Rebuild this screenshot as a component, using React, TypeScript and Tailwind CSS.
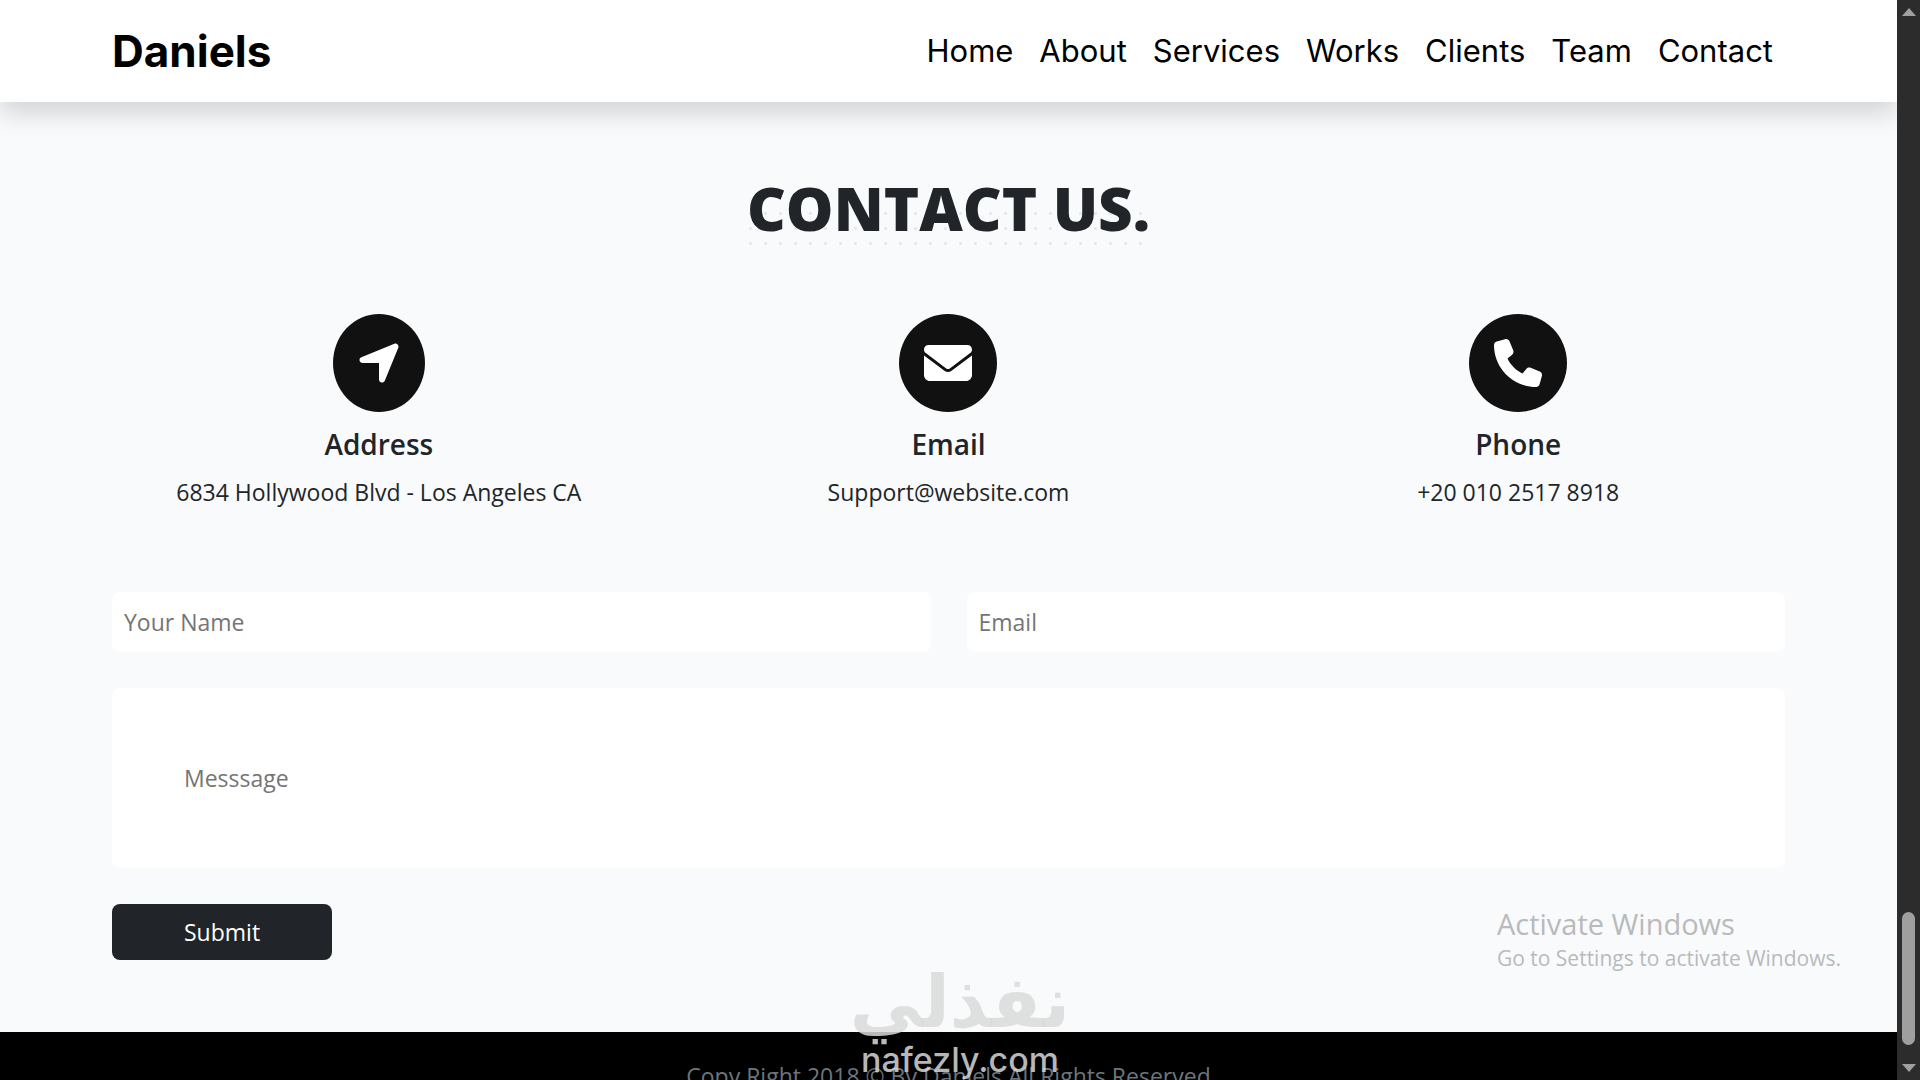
import React from 'react';
import { FaEnvelope, FaLocationArrow, FaPhone } from 'react-icons/fa6';

const NAV_LINKS = ['Home', 'About', 'Services', 'Works', 'Clients', 'Team', 'Contact'];

const CONTACTS = [
  { title: 'Address', text: '6834 Hollywood Blvd - Los Angeles CA', icon: <FaLocationArrow className="h-12 w-[42px]" /> },
  { title: 'Email', text: 'Support@website.com', icon: <FaEnvelope className="h-12 w-12" /> },
  { title: 'Phone', text: '+20 010 2517 8918', icon: <FaPhone className="h-12 w-12" /> },
];

const Header: React.FC = () => (
  <header className="relative z-10 flex h-[102px] shrink-0 items-center justify-between bg-white pl-28 pr-[124px] font-['Inter',sans-serif] text-black shadow-[0_12px_24px_rgba(0,0,0,0.15)]">
    <a href="#home" className="text-[44px] leading-[48px] font-bold">Daniels</a>
    <nav className="flex gap-[26px] text-[31px] leading-9">
      {NAV_LINKS.map((link) => (
        <a key={link} href={`#${link.toLowerCase()}`}>{link}</a>
      ))}
    </nav>
  </header>
);

const ContactForm: React.FC = () => (
  <form className="mt-[82px] grid grid-cols-2 gap-9" onSubmit={(e) => e.preventDefault()}>
    <input
      type="text"
      aria-label="Your Name"
      placeholder="Your Name"
      className="rounded-lg bg-white p-3 leading-9 placeholder:text-[#757575]"
    />
    <input
      type="email"
      aria-label="Email"
      placeholder="Email"
      className="rounded-lg bg-white p-3 leading-9 placeholder:text-[#757575]"
    />
    <textarea
      aria-label="Message"
      placeholder="Messsage"
      rows={1}
      className="col-span-2 block h-[180px] resize-none rounded-lg bg-white p-[72px] leading-9 placeholder:text-[#757575]"
    />
    <div className="col-span-2">
      <button type="submit" className="block rounded-lg bg-[#212529] px-[72px] py-[10px] leading-9 text-white">
        Submit
      </button>
    </div>
  </form>
);

const Scrollbar: React.FC = () => (
  <div className="flex w-[23px] shrink-0 flex-col items-center bg-[#2c2c2c] pt-2 pb-2">
    <svg viewBox="0 0 14 8" className="h-2 w-[14px] fill-[#a0a0a0]"><path d="M7 0l7 8H0z" /></svg>
    <div className="mt-auto mb-[19px] h-[133px] w-[13px] rounded-full bg-[#9f9f9f]" />
    <svg viewBox="0 0 14 8" className="h-2 w-[14px] fill-[#a0a0a0]"><path d="M7 8L0 0h14z" /></svg>
  </div>
);

export default function App() {
  return (
    <div className="relative flex h-screen overflow-hidden bg-[#f8fafb] font-['Open_Sans','Noto_Sans',sans-serif] text-[23px] text-[#212529]">
      <div className="flex min-w-0 flex-1 flex-col overflow-hidden">
        <Header />

        <main className="shrink-0 px-28 pt-[66px] pb-[72px]">
          <div className="flex justify-center">
            <h1 className="relative text-[60px] leading-[80px] font-extrabold">
              <span className="absolute -inset-x-1 top-[38px] h-[45px] bg-[radial-gradient(circle,#e3e7e9_1px,transparent_2px)] bg-[length:15px_15px]" />
              <span className="relative">CONTACT US.</span>
            </h1>
          </div>

          <div className="mt-[66px] grid grid-cols-3 gap-9">
            {CONTACTS.map(({ title, text, icon }) => (
              <div key={title} className="flex flex-col items-center">
                <div className="rounded-[50%] bg-[#111] p-[25px] text-white">{icon}</div>
                <h2 className="mt-[14px] text-[28px] leading-9 font-semibold">{title}</h2>
                <p className="mt-3 leading-9">{text}</p>
              </div>
            ))}
          </div>

          <ContactForm />
        </main>

        <footer className="shrink-0 bg-black py-[26px] text-center leading-9 text-[#6c757d]">
          Copy Right 2018 © By Daniels All Rights Reserved
        </footer>
      </div>

      <Scrollbar />

      {/* System notice */}
      <div className="absolute right-[79px] bottom-[108px] text-[#b9babb]">
        <p className="text-[29px] leading-10">Activate Windows</p>
        <p className="text-[21px] leading-7">Go to Settings to activate Windows.</p>
      </div>

      {/* Watermark */}
      <div className="absolute inset-x-0 bottom-0 z-20 flex flex-col items-center text-[#d9d9d9]/85">
        <p dir="rtl" className="font-['DejaVu_Sans',sans-serif] text-[72px] leading-[76px] font-bold">نفذلي</p>
        <p className="font-['Inter',sans-serif] text-[34px] leading-10 font-medium">nafezly.com</p>
      </div>
    </div>
  );
}
